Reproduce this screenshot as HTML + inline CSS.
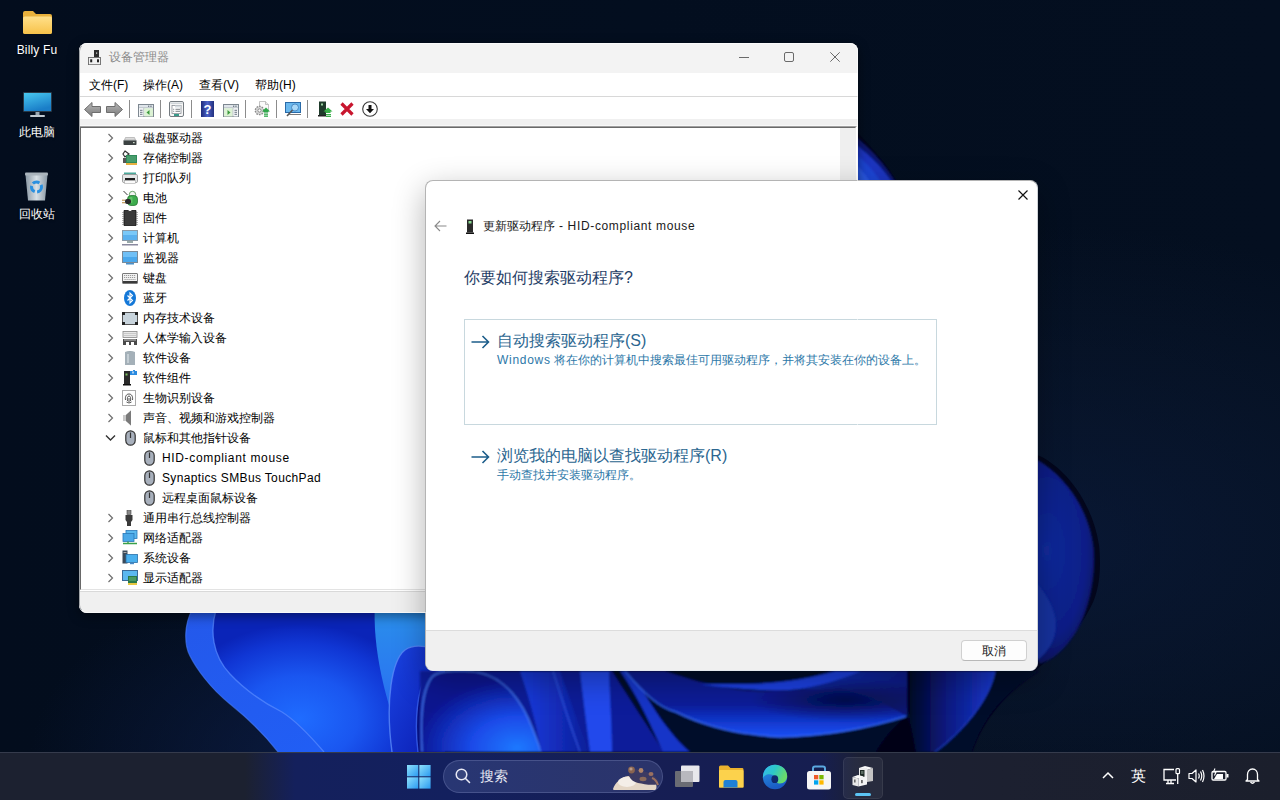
<!DOCTYPE html>
<html><head><meta charset="utf-8">
<style>
*{box-sizing:border-box;margin:0;padding:0}
html,body{width:1280px;height:800px;overflow:hidden}
body{position:relative;font-family:"Liberation Sans",sans-serif;font-size:12px;background:#0b1326;color:#000}
.abs{position:absolute}
#wall{position:absolute;left:0;top:0;width:1280px;height:752px}
.dicon{position:absolute;width:74px;text-align:center;color:#fff;font-size:12px;text-shadow:0 1px 2px rgba(0,0,0,.6)}
/* device manager */
#dm{position:absolute;left:79px;top:43px;width:779px;height:570px;border-radius:8px;overflow:hidden;background:#f0f0f0;box-shadow:0 3px 12px rgba(0,0,0,0.45)}
#dm .frame{position:absolute;left:0;top:0;width:779px;height:570px;border-radius:8px;border:1px solid rgba(255,255,255,0.55);border-left-color:#a0a4a8;z-index:5;pointer-events:none}
#dm .title{position:absolute;left:0;top:0;width:100%;height:30px;background:#f3f3f3}
#dm .menu{position:absolute;left:0;top:30px;width:100%;height:24px;background:#fff;border-bottom:1px solid #d8d8d8}
#dm .menu span{position:absolute;top:4px;line-height:16px}
#dm .tb{position:absolute;left:0;top:54px;width:100%;height:22px;background:#fff}
#dm .band{position:absolute;left:0;top:76px;width:100%;height:7px;background:#f0f0f0;border-bottom:1px solid #f8f8f8}
#dm .tree{position:absolute;left:0;top:83px;width:778px;height:465px;background:#fff;border-top:1px solid #a0a0a0;border-left:1px solid #a0a0a0;border-bottom:1px solid #fff;border-right:1px solid #fff}
#dm .tree2{position:absolute;left:1px;top:84px;width:776px;height:463px;border-top:1px solid #696969;border-left:1px solid #696969;border-bottom:1px solid #e3e3e3;border-right:1px solid #e3e3e3}
#dm .sb{position:absolute;left:761px;top:85px;width:16px;height:461px;background:#efefef}
#dm .status{position:absolute;left:0;top:548px;width:100%;height:22px;background:#f0f0f0;border-top:1px solid #d9d9d9}
.row{position:absolute;height:20px;line-height:20px;white-space:nowrap;font-size:12px;color:#000}
/* dialog */
#dlg{position:absolute;left:425px;top:180px;width:613px;height:491px;border-radius:8px;background:#fff;border:1px solid #b4b4b4;border-right-color:#d0d4d8;border-bottom-color:#e4e8ee;box-shadow:0 10px 32px rgba(0,0,0,.3);overflow:hidden}
#taskbar{position:absolute;left:0;top:752px;width:1280px;height:48px;background:linear-gradient(90deg,#1c2130 0px,#1c2130 245px,#14205c 295px,#13205e 450px,#161e54 650px,#161e50 820px,#1c2034 860px,#1c2030 1000px,#1b1f2c 1280px);border-top:1px solid #353b4c}
</style></head><body>
<svg id="wall" width="1280" height="752" viewBox="0 0 1280 752">
<defs>
<linearGradient id="bgl" x1="0" y1="0" x2="1" y2="0"><stop offset="0" stop-color="#030d1d"/><stop offset="0.5" stop-color="#030e1f"/><stop offset="1" stop-color="#040f20"/></linearGradient>
<radialGradient id="bgr" cx="0.82" cy="0.72" r="0.42"><stop offset="0" stop-color="#0a1a3a" stop-opacity="0.75"/><stop offset="1" stop-color="#0f1d36" stop-opacity="0"/></radialGradient>
<linearGradient id="lp" x1="0" y1="0" x2="1" y2="1"><stop offset="0" stop-color="#2458ea"/><stop offset="1" stop-color="#2060f8"/></linearGradient>
<radialGradient id="ip" cx="0.42" cy="0.78" r="0.62"><stop offset="0" stop-color="#1f6cff"/><stop offset="0.45" stop-color="#1a56f0"/><stop offset="0.8" stop-color="#1036d4"/><stop offset="1" stop-color="#0a24b8"/></radialGradient>
<linearGradient id="rp" x1="0" y1="0" x2="1" y2="0"><stop offset="0" stop-color="#3a8cf2"/><stop offset="0.5" stop-color="#2a6ef0"/><stop offset="1" stop-color="#1030c8"/></linearGradient>
<radialGradient id="pa" cx="0.8" cy="0.95" r="0.85"><stop offset="0" stop-color="#1a78ff"/><stop offset="0.45" stop-color="#1a4ae8"/><stop offset="1" stop-color="#0a1490"/></radialGradient>
<radialGradient id="rpet" cx="0.5" cy="0.45" r="0.6"><stop offset="0" stop-color="#122a9c"/><stop offset="0.7" stop-color="#0c1e86"/><stop offset="1" stop-color="#071050"/></radialGradient>
<linearGradient id="bp" x1="0" y1="0" x2="0.6" y2="1"><stop offset="0" stop-color="#1838d8"/><stop offset="0.6" stop-color="#0c1c90"/><stop offset="1" stop-color="#02062a"/></linearGradient>
<linearGradient id="cd" x1="0" y1="0" x2="1" y2="0.3"><stop offset="0" stop-color="#020628"/><stop offset="0.7" stop-color="#061060"/><stop offset="1" stop-color="#1a40e8"/></linearGradient>
<linearGradient id="band1" x1="0" y1="0" x2="1" y2="0"><stop offset="0" stop-color="#1a3ce0"/><stop offset="1" stop-color="#0c1e98"/></linearGradient>
<linearGradient id="r1g" x1="0" y1="0" x2="0" y2="1"><stop offset="0" stop-color="#2a92ea"/><stop offset="0.5" stop-color="#2a7af0"/><stop offset="1" stop-color="#2058ee"/></linearGradient><linearGradient id="r2g" x1="0" y1="0" x2="1" y2="1"><stop offset="0" stop-color="#1a44e4"/><stop offset="1" stop-color="#0a1cb0"/></linearGradient>
<linearGradient id="petC" x1="0" y1="0" x2="0" y2="1"><stop offset="0" stop-color="#0a1a90"/><stop offset="0.5" stop-color="#0a1c98"/><stop offset="0.85" stop-color="#1440dc"/><stop offset="1" stop-color="#1c50f4"/></linearGradient><radialGradient id="shd" cx="0.5" cy="0.5" r="0.5"><stop offset="0" stop-color="#000418" stop-opacity="0.85"/><stop offset="1" stop-color="#000418" stop-opacity="0"/></radialGradient>
<linearGradient id="petC2" x1="0" y1="0" x2="1" y2="0.5"><stop offset="0" stop-color="#1030c0"/><stop offset="1" stop-color="#0a1a80"/></linearGradient>
<linearGradient id="petE" x1="0" y1="0" x2="1" y2="0"><stop offset="0" stop-color="#020520"/><stop offset="0.45" stop-color="#0a1a80"/><stop offset="1" stop-color="#1838d0"/></linearGradient>
<radialGradient id="glow" cx="0.5" cy="0.5" r="0.5"><stop offset="0" stop-color="#0c1c44" stop-opacity="0.9"/><stop offset="1" stop-color="#0c1c44" stop-opacity="0"/></radialGradient>
<filter id="bl1"><feGaussianBlur stdDeviation="1"/></filter>
<filter id="bl3"><feGaussianBlur stdDeviation="3"/></filter>
<filter id="bl6"><feGaussianBlur stdDeviation="6"/></filter>
</defs>
<rect width="1280" height="752" fill="url(#bgl)"/>
<rect width="1280" height="752" fill="url(#bgr)"/>
<ellipse cx="330" cy="760" rx="300" ry="190" fill="url(#glow)"/>
<!-- silhouette / dark band -->
<path d="M600,60 L858,133 C872,148 886,163 896,180 L1030,452 C1062,462 1092,500 1099,545 C1102,575 1098,596 1088,612 C1078,630 1068,640 1060,648 C1048,660 1036,670 1024,680 C1008,694 996,708 988,720 C980,732 976,742 972,752 L278,752 C265,735 245,716 230,704 C210,688 196,668 190,656 C184,645 184,625 192,610 L150,400 Z" fill="#03061c"/>
<!-- right upper petal -->
<path d="M1036,459 C1065,475 1090,510 1094,550 C1096,585 1086,620 1072,638 C1062,652 1052,660 1040,664 L1000,600 Z" fill="url(#rpet)" filter="url(#bl1)"/>
<!-- right lower petal peeking -->
<path d="M1036,582 C1048,595 1056,612 1056,625 C1056,640 1048,652 1038,660 L1020,640 Z" fill="#12309e" filter="url(#bl1)"/>
<!-- top-right stripes near DM edge -->
<g filter="url(#bl1)"><path d="M850,132 C868,146 884,162 897,184 L850,184 Z" fill="#0a1870"/>
<path d="M850,140 C866,152 882,166 893,184 L850,184 Z" fill="#1a36c0"/>
<path d="M850,150 C862,158 874,170 882,184 L850,184 Z" fill="#1e44d4"/>
<path d="M850,160 C858,166 866,174 871,184 L850,184 Z" fill="#2a5ae8"/></g>
<!-- left outer petal -->
<path d="M192,600 L192,610 C184,625 184,645 190,656 C196,668 210,688 230,704 C245,716 265,735 278,752 L440,752 L440,600 Z" fill="url(#lp)"/>
<path d="M192,610 C184,625 184,645 190,656 C196,668 210,688 230,704 C245,716 265,735 278,752" fill="none" stroke="#4a80ff" stroke-width="1.2" opacity="0.6"/>
<!-- inner light petal -->
<path d="M216,600 L216,610 C210,630 212,655 230,674 C245,690 262,702 282,712 C298,722 312,738 324,752 L420,752 C400,700 376,650 374,600 Z" fill="url(#ip)"/>
<path d="M216,610 C210,630 212,655 230,674 C245,690 262,702 282,712 C298,722 312,738 324,752" fill="none" stroke="#5a8cff" stroke-width="1.3" opacity="0.7"/>
<path d="M375,600 C372,650 385,700 405,752 L440,752 L440,600 Z" fill="url(#r1g)"/>
<path d="M392,752 C385,700 392,660 405,650 C412,645 420,645 432,648 L440,648 L440,752 Z" fill="url(#r2g)"/>
<path d="M392,752 C385,700 392,660 405,650 C412,645 420,645 432,648" fill="none" stroke="#5a8af8" stroke-width="1.4" opacity="0.8"/>
<path d="M418,752 C414,720 418,690 425,678 C430,672 438,671 445,672 L445,752 Z" fill="#070e7a"/>
<path d="M418,752 C414,720 418,690 425,678 C430,672 438,671 445,672" fill="none" stroke="#3a64f0" stroke-width="1.4" opacity="0.8"/>
<g filter="url(#bl1)"><!-- under dialog: base -->
<path d="M420,671 L1000,671 C990,700 970,730 960,752 L420,752 Z" fill="#0c1c98"/>
<!-- petal P1 -->
<path d="M422,752 C420,720 422,690 432,677 C438,671 450,670 470,671 C495,673 515,690 528,718 C534,732 538,742 541,752 Z" fill="url(#pa)"/>
<path d="M422,752 C420,720 422,690 432,677 C438,671 450,670 470,671 C495,673 515,690 528,718 C534,732 538,742 541,752" fill="none" stroke="#4c84ff" stroke-width="1.6" opacity="0.8"/>
<path d="M541,752 C538,730 530,700 520,671 L560,671 C570,700 580,730 590,752 Z" fill="url(#band1)"/>
<path d="M553,671 C562,700 572,730 580,752" fill="none" stroke="#3a64f4" stroke-width="1.2" opacity="0.7"/>
<path d="M590,752 C586,720 582,690 580,671 L610,671 C612,700 614,730 612,752 Z" fill="#2448ec"/>
<path d="M609,671 C625,700 640,730 664,752 L612,752 C612,730 610,700 609,671 Z" fill="#0c1a9a"/>
<!-- center dark with arcs -->
<path d="M612,671 L1040,671 C1024,680 1008,694 996,708 C984,722 976,740 972,752 L612,752 Z" fill="#03072c"/>
<path d="M612,671 C630,700 650,730 664,752 L612,752 Z" fill="#0c1a9a"/>
<path d="M620,671 C640,700 652,728 663,752 L690,752 C670,735 650,705 632,671 Z" fill="#1634c8"/>
<path d="M625,671 C645,695 660,708 676,712 C700,724 730,732 751,734 C765,736 772,737 780,737 C820,736 860,731 907,716 C880,700 860,690 840,686 C800,690 770,693 740,690 C710,686 685,678 665,671 Z" fill="url(#petC)"/>
<path d="M625,671 C645,695 660,708 676,712 C700,724 730,732 751,734 C765,736 772,737 780,737 C820,736 860,731 907,716" fill="none" stroke="#3a70ff" stroke-width="1.5" opacity="0.8"/>
<path d="M800,689 C830,684 850,676 862,671 L907,671 L907,716 C890,705 870,696 840,688 C825,690 812,690 800,689 Z" fill="url(#petC2)"/>
<ellipse cx="845" cy="700" rx="95" ry="22" fill="url(#shd)" opacity="0.7"/>
<path d="M700,684 C740,690 780,692 800,689 C830,684 850,676 862,671 L835,671 C810,678 780,684 740,684 Z" fill="#1a40e0"/>
<path d="M907,716 C895,726 884,738 876,752 L918,752 C915,738 911,726 907,716 Z" fill="#010316"/>
<path d="M907,671 L995,671 C990,700 962,732 935,752 L916,752 C912,730 908,716 907,700 Z" fill="url(#petE)"/>
<path d="M995,671 C990,700 962,732 935,752" fill="none" stroke="#2a50e8" stroke-width="1.2" opacity="0.7"/>
</g></svg>

<svg class="abs" style="left:23px;top:11px" width="29" height="23" viewBox="0 0 29 23"><defs><linearGradient id="fg" x1="0" y1="0" x2="0" y2="1"><stop offset="0" stop-color="#ffe08a"/><stop offset="1" stop-color="#f7c24a"/></linearGradient></defs><path d="M0,2 Q0,0 2,0 H10 L13,3 H27 Q29,3 29,5 V21 Q29,23 27,23 H2 Q0,23 0,21 Z" fill="#e9b13c"/><path d="M0,7 Q0,5.5 2,5.5 H27 Q29,5.5 29,7.5 V21 Q29,23 27,23 H2 Q0,23 0,21 Z" fill="url(#fg)"/></svg>
<div class="dicon" style="left:0;top:42px;line-height:16px;letter-spacing:0.15px">Billy Fu</div>
<svg class="abs" style="left:23px;top:92px" width="29" height="26" viewBox="0 0 29 26"><defs><linearGradient id="mg" x1="0" y1="0" x2="0.4" y2="1"><stop offset="0" stop-color="#48c8f0"/><stop offset="1" stop-color="#1a7ec8"/></linearGradient></defs><rect x="0" y="0" width="29" height="20" rx="1" fill="#2a3a48"/><rect x="1" y="1" width="27" height="18" fill="url(#mg)"/><rect x="12.5" y="20" width="4" height="3" fill="#9aa6b0"/><rect x="7" y="23" width="15" height="2" rx="1" fill="#c0c8d0"/></svg>
<div class="dicon" style="left:0;top:124px;line-height:16px">此电脑</div>
<svg class="abs" style="left:25px;top:172px" width="23" height="29" viewBox="0 0 23 29"><defs><linearGradient id="rg" x1="0" y1="0" x2="1" y2="0"><stop offset="0" stop-color="#8a98a4"/><stop offset="0.5" stop-color="#d8e0e6"/><stop offset="1" stop-color="#8a98a4"/></linearGradient></defs><path d="M0.5,3 H22.5 L20,28.5 H3 Z" fill="url(#rg)"/><rect x="0" y="0.5" width="23" height="3" rx="1" fill="#aab4bc"/><circle cx="11.5" cy="15" r="5" fill="none" stroke="#2a90e0" stroke-width="3" stroke-dasharray="7 2.5"/></svg>
<div class="dicon" style="left:0;top:206px;line-height:16px">回收站</div>


<div id="dm">
  <div class="title">
    <svg class="abs" style="left:9px;top:7px" width="13" height="15" viewBox="0 0 13 15"><rect x="6" y="0" width="5" height="7" fill="#2e2e2e"/><rect x="8" y="2.5" width="1.2" height="1.2" fill="#ddd"/><rect x="0.5" y="7.5" width="12" height="7.2" fill="#f0f0f0" stroke="#6a6a6a" stroke-width="0.9"/><rect x="2.2" y="9.3" width="2" height="3" fill="#222"/><rect x="9" y="9.3" width="2" height="3" fill="#222"/></svg>
    <span class="abs" style="left:30px;top:6px;color:#8a8a8a;font-size:12px;line-height:16px">设备管理器</span>
    <div class="abs" style="left:660px;top:14px;width:10px;height:1px;background:#6a6a6a"></div>
    <div class="abs" style="left:705px;top:9px;width:10px;height:10px;border:1px solid #6a6a6a;border-radius:2px"></div>
    <svg class="abs" style="left:751px;top:9px" width="10" height="10" viewBox="0 0 10 10"><path d="M0.3,0.3 L9.7,9.7 M9.7,0.3 L0.3,9.7" stroke="#6a6a6a" stroke-width="1"/></svg>
  </div>
  <div class="menu"><span style="left:10px">文件(F)</span><span style="left:64px">操作(A)</span><span style="left:120px">查看(V)</span><span style="left:176px">帮助(H)</span></div>
  <div class="tb"></div>
  <div class="band"></div>
  <div class="abs" style="left:50px;top:57px;width:1px;height:18px;background:#8c8c8c"></div><div class="abs" style="left:81px;top:57px;width:1px;height:18px;background:#8c8c8c"></div><div class="abs" style="left:112px;top:57px;width:1px;height:18px;background:#8c8c8c"></div><div class="abs" style="left:166px;top:57px;width:1px;height:18px;background:#8c8c8c"></div><div class="abs" style="left:197px;top:57px;width:1px;height:18px;background:#8c8c8c"></div><div class="abs" style="left:228px;top:57px;width:1px;height:18px;background:#8c8c8c"></div>
  <svg class="abs" style="left:5px;top:59px" width="17" height="15" viewBox="0 0 17 15"><defs><linearGradient id="ga" x1="0" y1="0" x2="0" y2="1"><stop offset="0" stop-color="#b8b8b8"/><stop offset="1" stop-color="#7a7a7a"/></linearGradient></defs><path d="M0.5,7.5 L8,0.5 L8,4.5 L16.5,4.5 L16.5,10.5 L8,10.5 L8,14.5 Z" fill="url(#ga)" stroke="#6e6e6e" stroke-width="1"/></svg><svg class="abs" style="left:27px;top:59px" width="17" height="15" viewBox="0 0 17 15"><path d="M16.5,7.5 L9,0.5 L9,4.5 L0.5,4.5 L0.5,10.5 L9,10.5 L9,14.5 Z" fill="url(#ga)" stroke="#6e6e6e" stroke-width="1"/></svg><svg class="abs" style="left:59px;top:61px" width="16" height="13" viewBox="0 0 16 13"><rect x="0.5" y="0.5" width="15" height="12" fill="#fff" stroke="#7d8790"/><rect x="1" y="1" width="14" height="2.5" fill="#dfe5ea"/><rect x="10" y="1.6" width="1.3" height="1.3" fill="#6a7580"/><rect x="12.3" y="1.6" width="1.3" height="1.3" fill="#6a7580"/><rect x="1" y="3.5" width="14" height="0.8" fill="#9aa4ad"/><rect x="1" y="4.3" width="4.5" height="8.2" fill="#f4f6f8"/><path d="M2,6.3h2.5M2,8.3h2.5M2,10.3h2.5" stroke="#6a7580" stroke-width="1"/><rect x="5.5" y="4.3" width="0.8" height="8.2" fill="#9aa4ad"/><rect x="6.3" y="4.3" width="8.7" height="8.2" fill="#dcf2d4"/><path d="M11.5,6 L8.5,8.5 L11.5,11 Z" fill="#3c9a3c"/></svg><svg class="abs" style="left:90px;top:58px" width="15" height="16" viewBox="0 0 15 16"><rect x="0.5" y="0.5" width="14" height="15" rx="1.5" fill="#f6f6f6" stroke="#757b80"/><rect x="1.5" y="1.5" width="12" height="1.5" fill="#d0d6da"/><rect x="3" y="4.5" width="9" height="8" fill="#fff" stroke="#8a9096" stroke-width="0.8"/><rect x="6" y="4.5" width="6" height="2" fill="#d8dee2"/><path d="M4.2,8.3h1M6.5,8.3h4.5M4.2,10.3h1M6.5,10.3h4.5" stroke="#6a7076" stroke-width="0.9"/><rect x="5" y="13" width="5" height="2" fill="#3a9a8a"/></svg><svg class="abs" style="left:122px;top:58px" width="13" height="16" viewBox="0 0 13 16"><defs><linearGradient id="gh" x1="0" y1="0" x2="1" y2="0"><stop offset="0" stop-color="#1e2a7a"/><stop offset="0.5" stop-color="#4a62c8"/><stop offset="1" stop-color="#23307e"/></linearGradient></defs><rect x="0" y="0" width="13" height="16" fill="url(#gh)"/><text x="6.5" y="12.5" font-size="13" font-family="Liberation Sans" font-weight="bold" fill="#fff" text-anchor="middle">?</text></svg><svg class="abs" style="left:144px;top:61px" width="16" height="13" viewBox="0 0 16 13"><rect x="0.5" y="0.5" width="15" height="12" fill="#fff" stroke="#7d8790"/><rect x="1" y="1" width="14" height="2.5" fill="#dfe5ea"/><rect x="10" y="1.6" width="1.3" height="1.3" fill="#6a7580"/><rect x="12.3" y="1.6" width="1.3" height="1.3" fill="#6a7580"/><rect x="1" y="3.5" width="14" height="0.8" fill="#9aa4ad"/><rect x="1" y="4.3" width="8.7" height="8.2" fill="#dcf2d4"/><path d="M4.5,6 L7.5,8.5 L4.5,11 Z" fill="#3c9a3c"/><rect x="9.7" y="4.3" width="0.8" height="8.2" fill="#9aa4ad"/><rect x="10.5" y="4.3" width="4.5" height="8.2" fill="#f4f6f8"/><path d="M11.5,6.3h2.5M11.5,8.3h2.5M11.5,10.3h2.5" stroke="#6a7580" stroke-width="1"/></svg><svg class="abs" style="left:175px;top:58px" width="16" height="16" viewBox="0 0 16 16"><path d="M5.5,0.5 H11.5 L14.5,3.5 V11 H5.5 Z" fill="#fafafa" stroke="#b4b4b4" stroke-width="0.8"/><path d="M11.5,0.5 V3.5 H14.5" fill="#e8e8e8" stroke="#b4b4b4" stroke-width="0.8"/><circle cx="5.5" cy="9.5" r="4.2" fill="#d4d4d4" stroke="#8a8a8a" stroke-width="1.3" stroke-dasharray="1.6 1.1"/><circle cx="5.5" cy="9.5" r="1.6" fill="#fff" stroke="#7a7a7a" stroke-width="0.8"/><path d="M12,6.5 L16,10.5 H14 V11.5 H10 V10.5 H8 Z" fill="#2ea84a"/><rect x="10" y="12.5" width="4" height="1.3" fill="#2ea84a"/><rect x="10" y="14.5" width="4" height="1.3" fill="#2ea84a"/></svg><svg class="abs" style="left:206px;top:59px" width="16" height="15" viewBox="0 0 16 15"><rect x="0" y="0" width="16" height="11" fill="#2a6aa8"/><rect x="1" y="1" width="14" height="9" fill="#6ab8ee"/><circle cx="10" cy="5.5" r="3.5" fill="#a8d8f8" stroke="#3a7ab8" stroke-width="0.8"/><path d="M7.5,8 L2,14" stroke="#555" stroke-width="1.6"/><rect x="4" y="12" width="12" height="1" fill="#7a7a7a"/></svg><svg class="abs" style="left:239px;top:58px" width="15" height="16" viewBox="0 0 15 16"><rect x="1" y="0.5" width="7" height="13.5" fill="#1e3a2a"/><rect x="3" y="2.5" width="2" height="2" fill="#9ad0a0"/><rect x="0" y="14" width="8" height="1.5" fill="#222"/><path d="M10,6.5 L14.5,10.5 H12.5 V12 H7.5 V10.5 H5.5 Z" fill="#3ab04a"/><rect x="8" y="13" width="5" height="1.2" fill="#3ab04a"/><rect x="8" y="14.8" width="5" height="1.2" fill="#3ab04a"/></svg><svg class="abs" style="left:261px;top:59px" width="14" height="14" viewBox="0 0 14 14"><path d="M1.5,1.5 L12.5,12.5 M12.5,1.5 L1.5,12.5" stroke="#c8162e" stroke-width="3.2"/></svg><svg class="abs" style="left:283px;top:58px" width="16" height="16" viewBox="0 0 16 16"><circle cx="8" cy="8" r="7.3" fill="#fff" stroke="#3a3a3a" stroke-width="1.1"/><path d="M6.5,4 h3 v4 h2.5 L8,12.2 L4,8 h2.5 Z" fill="#111"/></svg>
  <div class="tree" id="tree"></div>
  <div class="tree2"></div>
  <div class="sb"></div>
  <svg class="abs" style="left:28px;top:90px" width="8" height="10" viewBox="0 0 8 10"><path d="M1.5,1 L5.5,5 L1.5,9" fill="none" stroke="#6e6e6e" stroke-width="1.2"/></svg><svg class="abs" style="left:43px;top:87px" width="16" height="16" viewBox="0 0 16 16"><path d="M2.5,10 L3.5,7.5 H12.5 L13.5,10 Z" fill="#dcdcdc" stroke="#a0a0a0" stroke-width="0.6"/><rect x="1.5" y="10" width="13" height="5" rx="0.8" fill="#3c4242"/><rect x="2" y="10" width="12" height="1" fill="#7a8080"/><rect x="11" y="12" width="1.6" height="1.2" fill="#c8d8c8"/></svg><div class="row" style="left:64px;top:85px">磁盘驱动器</div><svg class="abs" style="left:28px;top:110px" width="8" height="10" viewBox="0 0 8 10"><path d="M1.5,1 L5.5,5 L1.5,9" fill="none" stroke="#6e6e6e" stroke-width="1.2"/></svg><svg class="abs" style="left:43px;top:107px" width="16" height="16" viewBox="0 0 16 16"><path d="M3,1 L7,4 L3,7 L1,4 Z" fill="none" stroke="#333" stroke-width="1.2"/><rect x="1" y="8" width="6" height="5" fill="#555"/><rect x="4" y="5" width="11" height="8" fill="#2f8a5a"/><path d="M5,7h9M5,9h9M5,11h9" stroke="#7ac090" stroke-width="0.7"/><rect x="4" y="13" width="11" height="2" fill="#e8b040"/></svg><div class="row" style="left:64px;top:105px">存储控制器</div><svg class="abs" style="left:28px;top:130px" width="8" height="10" viewBox="0 0 8 10"><path d="M1.5,1 L5.5,5 L1.5,9" fill="none" stroke="#6e6e6e" stroke-width="1.2"/></svg><svg class="abs" style="left:43px;top:127px" width="16" height="16" viewBox="0 0 16 16"><rect x="2" y="2.5" width="12" height="2" fill="#4aa89a"/><rect x="0.5" y="4.5" width="15" height="8" rx="1.2" fill="#e4e6e6" stroke="#8a8a8a" stroke-width="0.8"/><rect x="3" y="8" width="10" height="2.5" fill="#1e1e1e"/><rect x="2.5" y="10.5" width="11" height="3" fill="#fafafa" stroke="#999" stroke-width="0.5"/></svg><div class="row" style="left:64px;top:125px">打印队列</div><svg class="abs" style="left:28px;top:150px" width="8" height="10" viewBox="0 0 8 10"><path d="M1.5,1 L5.5,5 L1.5,9" fill="none" stroke="#6e6e6e" stroke-width="1.2"/></svg><svg class="abs" style="left:43px;top:147px" width="16" height="16" viewBox="0 0 16 16"><path d="M1.5,1 L5.5,5" stroke="#3a3a3a" stroke-width="1"/><circle cx="10.5" cy="4.5" r="3.2" fill="#f4f4f4" stroke="#5a9a5a" stroke-width="0.9"/><rect x="5.5" y="5.5" width="10" height="10" rx="3.5" fill="#3cac4c" stroke="#2a7a36" stroke-width="0.8"/><rect x="7.5" y="7" width="3" height="6" rx="1" fill="#7ad07a" opacity="0.6"/><rect x="3" y="9" width="6" height="5" rx="2" fill="#2a2a2a"/><rect x="0" y="9.6" width="3" height="1.3" fill="#c8a468"/><rect x="0" y="12" width="3" height="1.3" fill="#c8a468"/></svg><div class="row" style="left:64px;top:145px">电池</div><svg class="abs" style="left:28px;top:170px" width="8" height="10" viewBox="0 0 8 10"><path d="M1.5,1 L5.5,5 L1.5,9" fill="none" stroke="#6e6e6e" stroke-width="1.2"/></svg><svg class="abs" style="left:43px;top:167px" width="16" height="16" viewBox="0 0 16 16"><path d="M2,0.5 H6 Q8,3 10,0.5 H14 V15.5 H2 Z" fill="#3a3a3a" stroke="#111" stroke-width="0.8"/><path d="M1,2v13M15,2v13" stroke="#666" stroke-width="1" stroke-dasharray="1 1"/></svg><div class="row" style="left:64px;top:165px">固件</div><svg class="abs" style="left:28px;top:190px" width="8" height="10" viewBox="0 0 8 10"><path d="M1.5,1 L5.5,5 L1.5,9" fill="none" stroke="#6e6e6e" stroke-width="1.2"/></svg><svg class="abs" style="left:43px;top:187px" width="16" height="16" viewBox="0 0 16 16"><rect x="0.5" y="0.5" width="15" height="10" fill="#5ab0ee" stroke="#8a9aa8"/><rect x="1" y="1" width="14" height="4" fill="#7ac8f8"/><rect x="5" y="11" width="6" height="2" fill="#9aa"/><rect x="0" y="14" width="16" height="1.5" fill="#8a8aa0"/></svg><div class="row" style="left:64px;top:185px">计算机</div><svg class="abs" style="left:28px;top:210px" width="8" height="10" viewBox="0 0 8 10"><path d="M1.5,1 L5.5,5 L1.5,9" fill="none" stroke="#6e6e6e" stroke-width="1.2"/></svg><svg class="abs" style="left:43px;top:207px" width="16" height="16" viewBox="0 0 16 16"><rect x="0.5" y="1.5" width="15" height="11" fill="#4aa8ec" stroke="#7a8a98"/><rect x="1" y="2" width="14" height="5" fill="#70c0f6"/><rect x="4" y="13" width="8" height="1.5" fill="#4a90c8"/></svg><div class="row" style="left:64px;top:205px">监视器</div><svg class="abs" style="left:28px;top:230px" width="8" height="10" viewBox="0 0 8 10"><path d="M1.5,1 L5.5,5 L1.5,9" fill="none" stroke="#6e6e6e" stroke-width="1.2"/></svg><svg class="abs" style="left:43px;top:227px" width="16" height="16" viewBox="0 0 16 16"><rect x="0.5" y="3.5" width="15" height="10" rx="0.5" fill="#f2f2f2" stroke="#7a7a7a"/><path d="M2,5.5h12M2,7.5h12M2.5,9.5h11" stroke="#9a9a9a" stroke-width="1" stroke-dasharray="1.2 0.8"/><rect x="1" y="11" width="14" height="2" fill="#3a3a3a"/></svg><div class="row" style="left:64px;top:225px">键盘</div><svg class="abs" style="left:28px;top:250px" width="8" height="10" viewBox="0 0 8 10"><path d="M1.5,1 L5.5,5 L1.5,9" fill="none" stroke="#6e6e6e" stroke-width="1.2"/></svg><svg class="abs" style="left:43px;top:247px" width="16" height="16" viewBox="0 0 16 16"><ellipse cx="8" cy="8" rx="6" ry="8" fill="#1478d8"/><path d="M5.5,5.5 L10.5,10.5 L8,13 V3 L10.5,5.5 L5.5,10.5" fill="none" stroke="#fff" stroke-width="1.1"/></svg><div class="row" style="left:64px;top:245px">蓝牙</div><svg class="abs" style="left:28px;top:270px" width="8" height="10" viewBox="0 0 8 10"><path d="M1.5,1 L5.5,5 L1.5,9" fill="none" stroke="#6e6e6e" stroke-width="1.2"/></svg><svg class="abs" style="left:43px;top:267px" width="16" height="16" viewBox="0 0 16 16"><rect x="0.5" y="2.5" width="15" height="12" rx="1.5" fill="#c8d4dc" stroke="#555"/><rect x="0" y="2" width="3" height="3" fill="#222"/><rect x="13" y="2" width="3" height="3" fill="#222"/><rect x="0" y="12" width="3" height="3" fill="#222"/><rect x="13" y="12" width="3" height="3" fill="#222"/></svg><div class="row" style="left:64px;top:265px">内存技术设备</div><svg class="abs" style="left:28px;top:290px" width="8" height="10" viewBox="0 0 8 10"><path d="M1.5,1 L5.5,5 L1.5,9" fill="none" stroke="#6e6e6e" stroke-width="1.2"/></svg><svg class="abs" style="left:43px;top:287px" width="16" height="16" viewBox="0 0 16 16"><rect x="1" y="1.5" width="14" height="6" fill="#e8e8e8" stroke="#888" stroke-width="0.8"/><path d="M2.5,3.5h11M2.5,5.5h11" stroke="#aaa" stroke-dasharray="1 1"/><path d="M1,9 H15 V15 H12 V12 H9 V15 H7 V12 H4 V15 H1 Z" fill="#4a4a4a"/><rect x="2" y="9" width="12" height="2" fill="#888"/></svg><div class="row" style="left:64px;top:285px">人体学输入设备</div><svg class="abs" style="left:28px;top:310px" width="8" height="10" viewBox="0 0 8 10"><path d="M1.5,1 L5.5,5 L1.5,9" fill="none" stroke="#6e6e6e" stroke-width="1.2"/></svg><svg class="abs" style="left:43px;top:307px" width="16" height="16" viewBox="0 0 16 16"><path d="M3,2 Q8,0 13,2 V15 H3 Z" fill="#9aa8b0"/><rect x="3" y="2" width="10" height="13" fill="#a8b4bc" opacity="0.7"/><rect x="5" y="4" width="2" height="9" fill="#c4ced4"/></svg><div class="row" style="left:64px;top:305px">软件设备</div><svg class="abs" style="left:28px;top:330px" width="8" height="10" viewBox="0 0 8 10"><path d="M1.5,1 L5.5,5 L1.5,9" fill="none" stroke="#6e6e6e" stroke-width="1.2"/></svg><svg class="abs" style="left:43px;top:327px" width="16" height="16" viewBox="0 0 16 16"><rect x="2" y="1" width="6" height="13" fill="#2a2a2a"/><rect x="3.5" y="3.5" width="2" height="2" fill="#7cc060"/><rect x="1" y="14" width="8" height="1.5" fill="#111"/><path d="M8,1 H11 V0 H13 V1 H15 V5 H8 Z" fill="#2a8ae0"/><rect x="10" y="1.5" width="2" height="2" fill="#fff" opacity="0.6"/></svg><div class="row" style="left:64px;top:325px">软件组件</div><svg class="abs" style="left:28px;top:350px" width="8" height="10" viewBox="0 0 8 10"><path d="M1.5,1 L5.5,5 L1.5,9" fill="none" stroke="#6e6e6e" stroke-width="1.2"/></svg><svg class="abs" style="left:43px;top:347px" width="16" height="16" viewBox="0 0 16 16"><rect x="0.5" y="0.5" width="13" height="15" fill="#fff" stroke="#aaa"/><path d="M7,4 C4,4 3,7 3.5,10 M7,4 C10,4 11,7 10.5,10 M7,6 C5.5,6 5,8 5.5,11 M7,6 C8.5,6 9,8 8.5,11 M7,8 V12 M4.5,12 Q7,14 9.5,12" fill="none" stroke="#444" stroke-width="0.9"/></svg><div class="row" style="left:64px;top:345px">生物识别设备</div><svg class="abs" style="left:28px;top:370px" width="8" height="10" viewBox="0 0 8 10"><path d="M1.5,1 L5.5,5 L1.5,9" fill="none" stroke="#6e6e6e" stroke-width="1.2"/></svg><svg class="abs" style="left:43px;top:367px" width="16" height="16" viewBox="0 0 16 16"><path d="M1,5 H4 L9,0.5 V15.5 L4,11 H1 Z" fill="#a8a8a8"/><path d="M4,5 L9,0.5 V15.5 L4,11 Z" fill="#7a7a7a"/><rect x="1" y="5" width="3" height="6" fill="#c8c8c8"/></svg><div class="row" style="left:64px;top:365px">声音、视频和游戏控制器</div><svg class="abs" style="left:26px;top:391px" width="11" height="8" viewBox="0 0 11 8"><path d="M1,1.5 L5.5,6 L10,1.5" fill="none" stroke="#333" stroke-width="1.4"/></svg><svg class="abs" style="left:46px;top:387px" width="11" height="16" viewBox="0 0 11 16"><rect x="0.8" y="0.8" width="9.4" height="14.4" rx="4.7" fill="#a8b0bc" stroke="#333" stroke-width="1.2"/><path d="M5.5,2.5 V8" stroke="#333" stroke-width="1.2"/></svg><div class="row" style="left:64px;top:385px">鼠标和其他指针设备</div><svg class="abs" style="left:65px;top:407px" width="11" height="16" viewBox="0 0 11 16"><rect x="0.8" y="0.8" width="9.4" height="14.4" rx="4.7" fill="#a8b0bc" stroke="#333" stroke-width="1.2"/><path d="M5.5,2.5 V8" stroke="#333" stroke-width="1.2"/></svg><div class="row" style="left:83px;top:405px"><span style="letter-spacing:0.65px">HID-compliant mouse</span></div><svg class="abs" style="left:65px;top:427px" width="11" height="16" viewBox="0 0 11 16"><rect x="0.8" y="0.8" width="9.4" height="14.4" rx="4.7" fill="#a8b0bc" stroke="#333" stroke-width="1.2"/><path d="M5.5,2.5 V8" stroke="#333" stroke-width="1.2"/></svg><div class="row" style="left:83px;top:425px"><span style="letter-spacing:0.35px">Synaptics SMBus TouchPad</span></div><svg class="abs" style="left:65px;top:447px" width="11" height="16" viewBox="0 0 11 16"><rect x="0.8" y="0.8" width="9.4" height="14.4" rx="4.7" fill="#a8b0bc" stroke="#333" stroke-width="1.2"/><path d="M5.5,2.5 V8" stroke="#333" stroke-width="1.2"/></svg><div class="row" style="left:83px;top:445px">远程桌面鼠标设备</div><svg class="abs" style="left:28px;top:470px" width="8" height="10" viewBox="0 0 8 10"><path d="M1.5,1 L5.5,5 L1.5,9" fill="none" stroke="#6e6e6e" stroke-width="1.2"/></svg><svg class="abs" style="left:46px;top:467px" width="8" height="16" viewBox="0 0 8 16"><rect x="2" y="0.5" width="4" height="4" fill="#888" stroke="#444" stroke-width="0.6"/><path d="M0.5,5 H7.5 V10 L6,12 V16 H2 V12 L0.5,10 Z" fill="#3a3a3a"/></svg><div class="row" style="left:64px;top:465px">通用串行总线控制器</div><svg class="abs" style="left:28px;top:490px" width="8" height="10" viewBox="0 0 8 10"><path d="M1.5,1 L5.5,5 L1.5,9" fill="none" stroke="#6e6e6e" stroke-width="1.2"/></svg><svg class="abs" style="left:43px;top:487px" width="16" height="16" viewBox="0 0 16 16"><rect x="4" y="0.5" width="11" height="8" fill="#5ab8ee" stroke="#2a78b8" stroke-width="0.8"/><rect x="1" y="3.5" width="11" height="8" fill="#4aa8e8" stroke="#2a78b8" stroke-width="0.8"/><path d="M1,13.5 H15 M6,11.5 V13.5" stroke="#3aa04a" stroke-width="1.4"/></svg><div class="row" style="left:64px;top:485px">网络适配器</div><svg class="abs" style="left:28px;top:510px" width="8" height="10" viewBox="0 0 8 10"><path d="M1.5,1 L5.5,5 L1.5,9" fill="none" stroke="#6e6e6e" stroke-width="1.2"/></svg><svg class="abs" style="left:43px;top:507px" width="16" height="16" viewBox="0 0 16 16"><rect x="0.5" y="0.5" width="5" height="13" fill="#3a4a5a"/><rect x="1.5" y="2" width="3" height="1" fill="#aaa"/><rect x="4" y="4.5" width="11.5" height="8" fill="#4ab0ee" stroke="#2a70a8" stroke-width="0.8"/><rect x="8" y="13" width="4" height="1.2" fill="#4a8ac8"/></svg><div class="row" style="left:64px;top:505px">系统设备</div><svg class="abs" style="left:28px;top:530px" width="8" height="10" viewBox="0 0 8 10"><path d="M1.5,1 L5.5,5 L1.5,9" fill="none" stroke="#6e6e6e" stroke-width="1.2"/></svg><svg class="abs" style="left:43px;top:527px" width="16" height="16" viewBox="0 0 16 16"><rect x="0.5" y="0.5" width="15" height="10" fill="#5ab8f0" stroke="#3a6a98"/><rect x="6" y="6" width="9" height="7" fill="#2a7a4a"/><path d="M7,8h7M7,10h7" stroke="#7acc8a" stroke-width="0.8"/><rect x="6" y="13" width="9" height="2" fill="#e8c840"/></svg><div class="row" style="left:64px;top:525px">显示适配器</div>
  <div class="status"></div>
  <div class="frame"></div>
</div>

<div id="dlg">
  <svg class="abs" style="left:592px;top:9px" width="10" height="10" viewBox="0 0 10 10"><path d="M0.5,0.5 L9.5,9.5 M9.5,0.5 L0.5,9.5" stroke="#111" stroke-width="1.15"/></svg>
  <svg class="abs" style="left:8px;top:39px" width="13" height="12" viewBox="0 0 13 12"><path d="M12.5,6 H1 M6,1 L1,6 L6,11" fill="none" stroke="#8a8a8a" stroke-width="1.1"/></svg>
  <svg class="abs" style="left:40px;top:38px" width="8" height="15" viewBox="0 0 8 15"><rect x="1" y="0.5" width="6" height="13" fill="#2a2a2a"/><rect x="2.5" y="2" width="3" height="2.5" fill="#8ad890"/><rect x="0" y="13.5" width="8" height="1.5" fill="#111"/></svg>
  <div class="abs" style="left:57px;top:37px;font-size:12px;line-height:16px;color:#1a1a1a;white-space:nowrap">更新驱动程序<span style="letter-spacing:0.65px"> - HID-compliant mouse</span></div>
  <div class="abs" style="left:38px;top:86px;font-size:16px;line-height:22px;color:#1f3d66;white-space:nowrap">你要如何搜索驱动程序?</div>
  <div class="abs" style="left:38px;top:138px;width:473px;height:106px;border:1px solid #c8d8de"></div>
  <svg class="abs" style="left:45px;top:154px" width="19" height="14" viewBox="0 0 19 14"><path d="M0.5,7 H17.5 M11.5,1 L17.5,7 L11.5,13" fill="none" stroke="#1c5d8a" stroke-width="1.6"/></svg>
  <div class="abs" style="left:71px;top:149px;font-size:16px;line-height:22px;color:#2b6690;white-space:nowrap">自动搜索驱动程序(S)</div>
  <div class="abs" style="left:71px;top:171px;font-size:12px;line-height:16px;color:#2d78a8;white-space:nowrap"><span style="letter-spacing:0.7px">Windows</span> 将在你的计算机中搜索最佳可用驱动程序，并将其安装在你的设备上。</div>
  <svg class="abs" style="left:45px;top:269px" width="19" height="14" viewBox="0 0 19 14"><path d="M0.5,7 H17.5 M11.5,1 L17.5,7 L11.5,13" fill="none" stroke="#1c5d8a" stroke-width="1.6"/></svg>
  <div class="abs" style="left:71px;top:264px;font-size:16px;line-height:22px;color:#2b6690;white-space:nowrap">浏览我的电脑以查找驱动程序(R)</div>
  <div class="abs" style="left:71px;top:286px;font-size:12px;line-height:16px;color:#2d78a8;white-space:nowrap">手动查找并安装驱动程序。</div>
  <div class="abs" style="left:0;top:449px;width:100%;height:60px;background:#f0f0f0;border-top:1px solid #dcdcdc"></div>
  <div class="abs" style="left:535px;top:459px;width:66px;height:21px;background:#fdfdfd;border:1px solid #d0d0d0;border-bottom-color:#b8b8b8;border-radius:4px;text-align:center;line-height:21px;font-size:12px;color:#1a1a1a">取消</div>
</div>

<div id="taskbar">
  <svg class="abs" style="left:407px;top:12px" width="24" height="24" viewBox="0 0 24 24"><defs><linearGradient id="wg" x1="0" y1="0" x2="1" y2="1"><stop offset="0" stop-color="#8ee0fc"/><stop offset="1" stop-color="#2a9af0"/></linearGradient></defs><rect x="0" y="0" width="11.3" height="11.3" fill="url(#wg)"/><rect x="12.3" y="0" width="11.3" height="11.3" fill="url(#wg)"/><rect x="0" y="12.3" width="11.3" height="11.3" fill="url(#wg)"/><rect x="12.3" y="12.3" width="11.3" height="11.3" fill="url(#wg)"/></svg>
  <div class="abs" style="left:443px;top:7px;width:220px;height:33px;border-radius:16.5px;background:rgba(120,130,190,0.22);border:1px solid rgba(160,170,220,0.25)"></div>
  <svg class="abs" style="left:455px;top:15px" width="16" height="16" viewBox="0 0 16 16"><circle cx="6.5" cy="6.5" r="5.3" fill="rgba(255,255,255,0.08)" stroke="#e8e8f4" stroke-width="1.5"/><path d="M10.3,10.3 L14.5,14.5" stroke="#e8e8f4" stroke-width="1.6" stroke-linecap="round"/></svg>
  <div class="abs" style="left:480px;top:14px;font-size:14px;line-height:18px;color:#e4e6f2">搜索</div>
  <svg class="abs" style="left:612px;top:11px" width="50" height="28" viewBox="0 0 50 28"><path d="M1,25 C3,19 9,13 16,12 C22,12 26,16 28,19 L43,19 C45,21 45,25 43,26 L4,26 C2,26 1,26 1,25 Z" fill="#e4d6c6"/><ellipse cx="15" cy="18" rx="9" ry="5" fill="#f4eee8"/><path d="M17,6 C20,4 26,5 30,7 C36,8 42,10 46,16 L46,20 C40,22 32,20 26,19 C22,18 19,16 17,12 Z" fill="#3c3a62"/><circle cx="19.5" cy="6" r="3.4" fill="#8a6450"/><circle cx="19" cy="5" r="1.6" fill="#b89a8a"/><circle cx="29" cy="6.5" r="2.4" fill="#b08468"/><ellipse cx="39" cy="10" rx="2.5" ry="2" fill="#9a7060"/><ellipse cx="31" cy="15" rx="3.5" ry="2.2" fill="#8a6a5a"/><path d="M40,14 C43,15 45,18 46,21" stroke="#9a7060" stroke-width="2" fill="none"/></svg>
  <svg class="abs" style="left:675px;top:12px" width="25" height="23" viewBox="0 0 25 23"><rect x="0" y="6" width="18" height="16" rx="1" fill="#6a6c74"/><rect x="6" y="0.5" width="18.5" height="16.5" rx="1" fill="#e8e8ec"/><rect x="6" y="6" width="12" height="11" fill="#b8b8be"/></svg>
  <svg class="abs" style="left:719px;top:12px" width="25" height="23" viewBox="0 0 25 23"><path d="M0,2 Q0,0.5 1.5,0.5 H9 L11.5,3 H23.5 Q24.5,3 24.5,4.5 V22.5 H0 Z" fill="#eab22e"/><rect x="0" y="5" width="24.5" height="17.5" rx="1" fill="#fcd24c"/><path d="M4.5,22.5 V17 Q4.5,15 6.5,15 H16.5 Q18.5,15 18.5,17 V22.5 Z" fill="#1f80d6"/></svg>
  <svg class="abs" style="left:762px;top:11px" width="26" height="26" viewBox="0 0 26 26"><defs><linearGradient id="eb" x1="0" y1="0" x2="0.3" y2="1"><stop offset="0" stop-color="#2a9ae8"/><stop offset="1" stop-color="#1a5cc4"/></linearGradient><linearGradient id="eg1" x1="0" y1="0" x2="1" y2="0.4"><stop offset="0" stop-color="#38b8f0"/><stop offset="0.5" stop-color="#2cc8c8"/><stop offset="1" stop-color="#6ada6a"/></linearGradient></defs><circle cx="13" cy="13" r="12.2" fill="url(#eb)"/><path d="M0.9,14 C0.9,6 6,0.8 13,0.8 C20,0.8 25.2,6 25.2,12 C25.2,16.5 22,19.5 18,19.5 C14.5,19.5 12.8,17 13.5,13.5 C12,10.5 8,9.5 5,10.5 C3,11.2 1.6,12.5 0.9,14 Z" fill="url(#eg1)"/><ellipse cx="12.8" cy="15.2" rx="3.4" ry="3.9" fill="#0e2a6e"/></svg>
  <svg class="abs" style="left:807px;top:12px" width="24" height="25" viewBox="0 0 24 25"><path d="M6,7 V3.5 Q6,1.5 8,1.5 H16 Q18,1.5 18,3.5 V7" fill="none" stroke="#5aa8e0" stroke-width="2"/><rect x="0" y="6" width="24" height="18.5" rx="2.5" fill="#f6f6f6"/><rect x="7" y="10" width="4.3" height="4.3" fill="#f05a28"/><rect x="12.3" y="10" width="4.3" height="4.3" fill="#7ab800"/><rect x="7" y="15.3" width="4.3" height="4.3" fill="#00a4ef"/><rect x="12.3" y="15.3" width="4.3" height="4.3" fill="#ffb900"/></svg>
  <div class="abs" style="left:843px;top:4px;width:40px;height:42px;border-radius:5px;background:rgba(255,255,255,0.055);border:1px solid rgba(255,255,255,0.075)"></div>
  <svg class="abs" style="left:852px;top:12px" width="22" height="22" viewBox="0 0 22 22"><path d="M7,3 L13,1 L21,3 L15,5 Z" fill="#fafafa"/><rect x="7" y="3" width="8" height="13" fill="#ececec"/><path d="M15,5 L21,3 V16 L15,17 Z" fill="#c4c4c4"/><rect x="8" y="5" width="4.5" height="7" fill="#1e2a24"/><rect x="9" y="6" width="2.5" height="3" fill="#5a6a60"/><path d="M0.5,12 L6,10 L12,11.5 L6.5,13.5 Z" fill="#fafafa"/><path d="M0.5,12 L6.5,13.5 V21.5 L0.5,20 Z" fill="#e8e8e8"/><path d="M6.5,13.5 L15,11 V19.5 L6.5,21.5 Z" fill="#f4f4f4"/><rect x="2" y="14.5" width="1.6" height="3" fill="#6a6a6a"/><rect x="9" y="15" width="1.8" height="3.2" fill="#6a6a6a"/></svg>
  <div class="abs" style="left:855px;top:40px;width:16px;height:3px;border-radius:2px;background:#5cc4f4"></div>
  <svg class="abs" style="left:1102px;top:18px" width="12" height="8" viewBox="0 0 12 8"><path d="M1,7 L6,2 L11,7" fill="none" stroke="#fff" stroke-width="1.5"/></svg>
  <div class="abs" style="left:1131px;top:13px;font-size:15px;line-height:20px;color:#fff">英</div>
  <svg class="abs" style="left:1163px;top:15px" width="18" height="17" viewBox="0 0 18 17"><path d="M11,1.5 H1 V12 H13" fill="none" stroke="#fff" stroke-width="1.3"/><path d="M5,12 V15 M8,12 V15 M3,15.5 H11" stroke="#fff" stroke-width="1.3"/><rect x="13" y="0.7" width="3.5" height="5" rx="1" fill="none" stroke="#fff" stroke-width="1.2"/><path d="M14.7,5.7 V16" stroke="#fff" stroke-width="1.3"/></svg>
  <svg class="abs" style="left:1188px;top:16px" width="17" height="14" viewBox="0 0 17 14"><path d="M1,4.5 H4 L8,1 V13 L4,9.5 H1 Z" fill="none" stroke="#fff" stroke-width="1.2" stroke-linejoin="round"/><path d="M10.5,4.5 Q12,7 10.5,9.5 M12.5,2.5 Q15,7 12.5,11.5 M14.5,1 Q17.5,7 14.5,13" fill="none" stroke="#fff" stroke-width="1.2"/></svg>
  <svg class="abs" style="left:1211px;top:15px" width="18" height="13" viewBox="0 0 18 13"><rect x="1" y="3.5" width="14" height="8.5" rx="1.2" fill="none" stroke="#fff" stroke-width="1.3"/><rect x="15.5" y="6" width="2" height="3.5" fill="#fff"/><path d="M3,11 L6,6 H12 V11 Z" fill="#fff"/><path d="M4,0.5 L2.5,4 H5 L3.5,7.5" fill="none" stroke="#fff" stroke-width="1.1"/></svg>
  <svg class="abs" style="left:1245px;top:15px" width="15" height="16" viewBox="0 0 15 16"><path d="M2.5,11.5 V6.5 C2.5,3.5 4.5,1 7.5,1 C10.5,1 12.5,3.5 12.5,6.5 V11.5 L14,13 H1 Z" fill="none" stroke="#fff" stroke-width="1.3" stroke-linejoin="round"/><path d="M5.5,14 Q7.5,16.5 9.5,14" fill="none" stroke="#fff" stroke-width="1.3"/></svg>
</div>
</body></html>
